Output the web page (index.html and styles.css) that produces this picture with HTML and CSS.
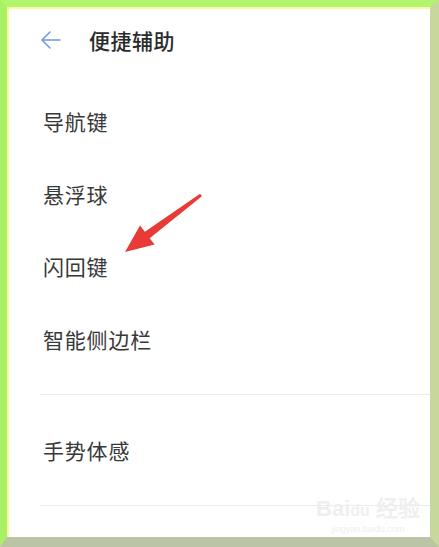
FILE: index.html
```html
<!doctype html>
<html lang="zh-CN">
  <head>
    <meta charset="UTF-8" />
    <meta name="viewport" content="width=device-width, initial-scale=1.0" />
    <title>便捷辅助</title>
    <link rel="stylesheet" href="styles.css">
  </head>
  <body>
    <div class="frame">
      <div class="screen">
        <header class="header">
          <svg class="back" viewBox="0 0 24 24" fill="none" xmlns="http://www.w3.org/2000/svg">
            <path d="M21 12H3M11 4L3 12L11 20" stroke="#6c9ade" stroke-width="1.6" stroke-linecap="round" stroke-linejoin="round" />
          </svg>
          <h1>便捷辅助</h1>
        </header>

        <ul class="group">
          <li>导航键</li>
          <li>悬浮球</li>
          <li>闪回键</li>
          <li>智能侧边栏</li>
        </ul>

        <ul class="group group-second">
          <li>手势体感</li>
        </ul>

        <!-- annotation arrow drawn over the list -->
        <svg class="pointer" viewBox="0 0 439 547" xmlns="http://www.w3.org/2000/svg">
          <polygon
            points="200.1,193.8 201.9,196.2 149.7,238.2 154.6,244.5 125,252 140,225.5 144.9,231.8"
            fill="#e83a36"
          />
        </svg>

        <div class="watermark">
          <div class="wm-logo">Bai<span>du</span> 经验</div>
          <div class="wm-url">jingyan.baidu.com</div>
        </div>
      </div>
    </div>
  </body>
</html>
```

FILE: styles.css
```css
* {
  box-sizing: border-box;
  margin: 0;
  padding: 0;
}

body {
  font-family: "Noto Sans CJK SC", "Noto Sans", sans-serif;
  width: 439px;
  height: 547px;
  overflow: hidden;
}

.frame {
  width: 439px;
  height: 547px;
  border-top: 7px solid #b2f46e;
  border-left: 7px solid #a9f064;
  border-right: 9px solid #c7d89c;
  border-bottom: 10px solid #bbc4a5;
}

.screen {
  position: relative;
  height: 100%;
  background: #fff;
  border-top: 2px solid #f6fda0;
  border-left: 2px solid #f6fda0;
}

.header {
  height: 62px;
  display: flex;
  align-items: center;
  padding-left: 30px;
}

.back {
  width: 24px;
  height: 24px;
}

.header h1 {
  margin-left: 26px;
  font-size: 21px;
  font-weight: 500;
  color: #2a2a2a;
  letter-spacing: 0.5px;
}

.group {
  list-style: none;
  padding: 14px 0 19px 3px;
  margin-left: 31px;
  border-bottom: 1px solid #ececec;
}

.group li {
  height: 72.5px;
  display: flex;
  align-items: center;
  font-size: 21px;
  color: #383838;
  letter-spacing: 0.8px;
}

.group-second {
  padding-top: 19px;
}

.group-second li {
  height: 72px;
}

.pointer {
  position: absolute;
  left: -9px;
  top: -9px;
  width: 439px;
  height: 547px;
  pointer-events: none;
}

.watermark {
  position: absolute;
  right: 10px;
  bottom: 2px;
  text-align: center;
  color: #efefef;
  font-family: "Liberation Sans", sans-serif;
}

.wm-logo {
  font-size: 22px;
  font-weight: bold;
  line-height: 24px;
}

.wm-logo span {
  font-size: 16px;
}

.wm-url {
  font-size: 9px;
  line-height: 12px;
}
```
